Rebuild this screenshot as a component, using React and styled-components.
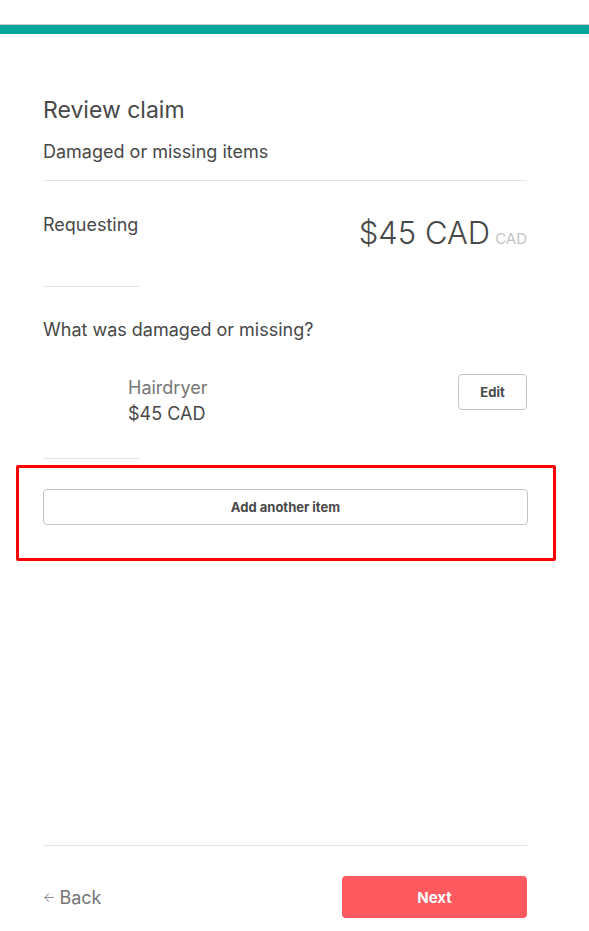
import styled, { createGlobalStyle } from "styled-components"

const Global = createGlobalStyle`
    body {
        margin: 0;
        background: #ffffff;
        font-family: "Inter", "Liberation Sans", sans-serif;
        color: #484848;
    }
`

export default function App() {
    return (
        <Page>
            <Global />
            <TopBar />
            <Content>
                <Title>Review claim</Title>
                <Subtitle>Damaged or missing items</Subtitle>
                <Divider />
                <RequestRow>
                    <Label>Requesting</Label>
                    <Amount>$45 CAD<small>CAD</small></Amount>
                </RequestRow>
                <Divider short />
                <Question>What was damaged or missing?</Question>
                <ItemRow>
                    <ItemInfo>
                        <ItemName>Hairdryer</ItemName>
                        <ItemPrice>$45 CAD</ItemPrice>
                    </ItemInfo>
                    <GhostButton small>Edit</GhostButton>
                </ItemRow>
                <Divider short />
                <Highlight>
                    <GhostButton>Add another item</GhostButton>
                </Highlight>
            </Content>
            <Footer>
                <Divider />
                <Actions>
                    <BackLink><span>←</span>Back</BackLink>
                    <NextButton>Next</NextButton>
                </Actions>
            </Footer>
        </Page>
    )
}

const Page = styled.div`
    min-height: 931px;
    display: flex;
    flex-direction: column;
`
const TopBar = styled.div`
    margin-top: 24px;
    height: 9px;
    background: #00a69c;
    border-top: 1px solid #c8c8c8;
`
const Content = styled.div`
    padding: 0 62px 0 43px;
    display: flex;
    flex-direction: column;
`
const Title = styled.h1`
    margin: 62px 0 0;
    font-size: 23px;
    font-weight: 400;
    line-height: 28px;
    color: #484848;
`
const Subtitle = styled.div`
    margin-top: 17px;
    margin-bottom: 17px;
    font-size: 18px;
    line-height: 22px;
`
const Divider = styled.div`
    height: 1px;
    background: #e4e4e4;
    width: ${props => props.short ? "97px" : "100%"};
`
const RequestRow = styled.div`
    margin-top: 33px;
    height: 72px;
    display: flex;
    justify-content: space-between;
    align-items: flex-start;
`
const Label = styled.div`
    font-size: 18px;
    line-height: 22px;
`
const Amount = styled.div`
    margin-top: -1px;
    font-size: 31px;
    font-weight: 300;
    line-height: 40px;
    color: #484848;
    small{
        margin-left: 5px;
        font-size: 15px;
        font-weight: 400;
        color: #c4c4c4;
    }
`
const Question = styled.div`
    margin-top: 32px;
    font-size: 18px;
    line-height: 22px;
`
const ItemRow = styled.div`
    margin-top: 33px;
    height: 84px;
    display: flex;
    justify-content: space-between;
    align-items: flex-start;
`
const ItemInfo = styled.div`
    padding-left: 85px;
    padding-top: 1px;
`
const ItemName = styled.div`
    font-size: 18px;
    line-height: 26px;
    color: #767676;
`
const ItemPrice = styled.div`
    font-size: 18px;
    line-height: 26px;
    color: #484848;
`
const GhostButton = styled.button`
    width: ${props => props.small ? "69px" : "100%"};
    height: 36px;
    background: #ffffff;
    border: 1px solid #c4c4c4;
    border-radius: 4px;
    font-family: inherit;
    font-size: 13px;
    font-weight: 700;
    color: #484848;
`
const Highlight = styled.div`
    margin: 6px -29px 0 -27px;
    padding: 21px 25px 33px 24px;
    border: 3px solid #ff0000;
    border-radius: 2px;
`
const Footer = styled.div`
    margin-top: auto;
    padding: 0 62px 13px 43px;
`
const Actions = styled.div`
    margin-top: 30px;
    display: flex;
    justify-content: space-between;
    align-items: center;
`
const BackLink = styled.div`
    font-size: 18px;
    color: #767676;
    display: flex;
    align-items: center;
    span{
        font-size: 13px;
        font-weight: 300;
        margin-right: 4px;
    }
`
const NextButton = styled.button`
    width: 185px;
    height: 42px;
    border: none;
    border-radius: 4px;
    background: #ff5a5f;
    color: #ffffff;
    font-family: inherit;
    font-size: 15px;
    font-weight: 700;
`
